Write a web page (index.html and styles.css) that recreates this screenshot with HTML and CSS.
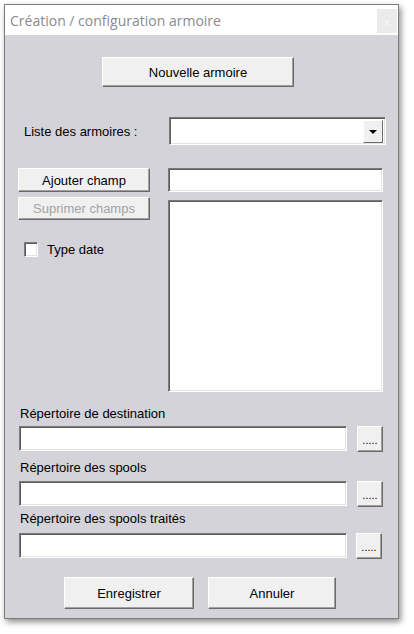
FILE: index.html
```html
<!DOCTYPE html>
<html lang="fr">
<head>
<meta charset="utf-8">
<title>Création / configuration armoire</title>
<link rel="stylesheet" href="styles.css">
</head>
<body>
<div class="window">
  <div class="titlebar">
    <span class="title">Création / configuration armoire</span>
    <span class="close">x</span>
  </div>
  <div class="content">
    <button class="btn btn-new">Nouvelle armoire</button>
    <div class="row-list">
      <span class="lbl-list">Liste des armoires :</span>
      <div class="combo"><span class="combo-btn"><span class="arrow"></span></span></div>
    </div>
    <div class="mid">
      <div class="mid-left">
        <button class="btn btn-small">Ajouter champ</button>
        <button class="btn btn-small disabled">Suprimer champs</button>
        <label class="check-row"><span class="checkbox"></span><span>Type date</span></label>
      </div>
      <div class="mid-right">
        <div class="field field-champ"></div>
        <div class="field listbox"></div>
      </div>
    </div>
    <div class="dir dir1">
      <div class="dir-lbl">Répertoire de destination</div>
      <div class="dir-row"><div class="field dir-field"></div><button class="btn btn-dots">.....</button></div>
    </div>
    <div class="dir dir2">
      <div class="dir-lbl">Répertoire des spools</div>
      <div class="dir-row"><div class="field dir-field"></div><button class="btn btn-dots">.....</button></div>
    </div>
    <div class="dir dir3">
      <div class="dir-lbl">Répertoire des spools traités</div>
      <div class="dir-row"><div class="field dir-field"></div><button class="btn btn-dots">.....</button></div>
    </div>
    <div class="actions">
      <button class="btn btn-save">Enregistrer</button>
      <button class="btn btn-cancel">Annuler</button>
    </div>
  </div>
</div>
</body>
</html>
```

FILE: styles.css
```css
* { box-sizing: border-box; }
html, body { margin: 0; padding: 0; background: #ffffff; }
body {
  width: 414px;
  height: 634px;
  overflow: hidden;
  font-family: "Liberation Sans", Arial, sans-serif;
  font-size: 13px;
  color: #000;
}
.window {
  margin: 4px 0 0 4px;
  width: 395px;
  height: 615px;
  border: 1px solid #7c7c7c;
  box-shadow: 2px 3px 6px rgba(0, 0, 0, 0.45);
  display: flex;
  flex-direction: column;
  background: #d4d3d9;
}
.titlebar {
  height: 30px;
  flex: none;
  background: #ffffff;
  display: flex;
  align-items: center;
  justify-content: space-between;
  padding: 0 1px 0 5px;
}
.title {
  font-family: "Open Sans", "Noto Sans", sans-serif;
  font-size: 14px;
  color: #8a8a8a;
}
.close {
  width: 20px;
  height: 24px;
  margin-top: 2px;
  background: #ebebeb;
  color: #f8f8f8;
  font-family: "Open Sans", sans-serif;
  font-size: 11px;
  display: flex;
  align-items: center;
  justify-content: center;
}
.content {
  flex: 1;
  padding: 22px 0 0 13px;
  display: flex;
  flex-direction: column;
  align-items: flex-start;
}
.btn {
  font-family: "Liberation Sans", Arial, sans-serif;
  font-size: 13px;
  color: #000;
  background: #f0f0f0;
  border: 1px solid;
  border-color: #ffffff #6a6a6a #6a6a6a #ffffff;
  box-shadow: inset -1px -1px 0 #a0a0a0;
  padding: 0;
  margin: 0;
  display: flex;
  align-items: center;
  justify-content: center;
}
.field {
  background: #ffffff;
  border: 1px solid;
  border-color: #7a7a7a #ffffff #ffffff #7a7a7a;
  box-shadow: inset 1px 1px 0 #5e5e5e, inset -1px -1px 0 #e4e4e4;
}
.btn-new {
  width: 192px;
  height: 30px;
  margin-left: 84px;
}
.row-list {
  margin-top: 30px;
  display: flex;
  align-items: center;
}
.lbl-list {
  width: 151px;
  padding-left: 6px;
}
.combo {
  width: 217px;
  height: 28px;
  background: #fff;
  border: 1px solid;
  border-color: #7a7a7a #ffffff #ffffff #7a7a7a;
  box-shadow: inset 1px 1px 0 #5e5e5e, inset -1px -1px 0 #e4e4e4;
  display: flex;
  justify-content: flex-end;
  align-items: center;
  padding-right: 2px;
}
.combo-btn {
  width: 20px;
  height: 23px;
  background: #f0f0f0;
  border: 1px solid;
  border-color: #ffffff #6a6a6a #6a6a6a #ffffff;
  display: flex;
  align-items: center;
  justify-content: center;
}
.arrow {
  width: 0;
  height: 0;
  border-left: 4px solid transparent;
  border-right: 4px solid transparent;
  border-top: 4px solid #000;
  margin-top: 1px;
}
.mid {
  margin-top: 23px;
  display: grid;
  grid-template-columns: 150px 215px;
}
.mid-left {
  display: flex;
  flex-direction: column;
  align-items: flex-start;
}
.btn-small {
  width: 132px;
  height: 24px;
}
.btn-small.disabled {
  margin-top: 5px;
  height: 23px;
  color: #a3a3a3;
}
.check-row {
  margin-top: 22px;
  margin-left: 6px;
  display: flex;
  align-items: center;
  gap: 9px;
}
.checkbox {
  width: 14px;
  height: 15px;
  background: #fff;
  border: 1px solid;
  border-color: #7a7a7a #ffffff #ffffff #7a7a7a;
  box-shadow: inset 1px 1px 0 #5e5e5e, inset -1px -1px 0 #e4e4e4;
}
.mid-right {
  display: flex;
  flex-direction: column;
}
.field-champ {
  height: 24px;
}
.listbox {
  margin-top: 8px;
  height: 192px;
}
.dir-lbl {
  line-height: 15px;
  padding-left: 2px;
}
.dir-row {
  display: flex;
  align-items: flex-start;
  gap: 10px;
  margin-left: 1px;
}
.dir-field {
  width: 328px;
  height: 25px;
}
.btn-dots {
  width: 26px;
  height: 26px;
  align-items: flex-end;
  padding-bottom: 7px;
  font-size: 11px;
  letter-spacing: 0;
  line-height: 8px;
}
.dir1 { margin-top: 14px; }
.dir1 .dir-row { margin-top: 5px; }
.dir2 { margin-top: 8px; }
.dir2 .dir-row { margin-top: 6px; }
.dir3 { margin-top: 4px; }
.dir3 .dir-row { margin-top: 7px; }
.dir3 .btn-dots { margin-left: -1px; }
.actions {
  margin-top: 18px;
  margin-left: 46px;
  display: flex;
  gap: 14px;
}
.btn-save {
  width: 130px;
  height: 32px;
}
.btn-cancel {
  width: 128px;
  height: 32px;
}
```
